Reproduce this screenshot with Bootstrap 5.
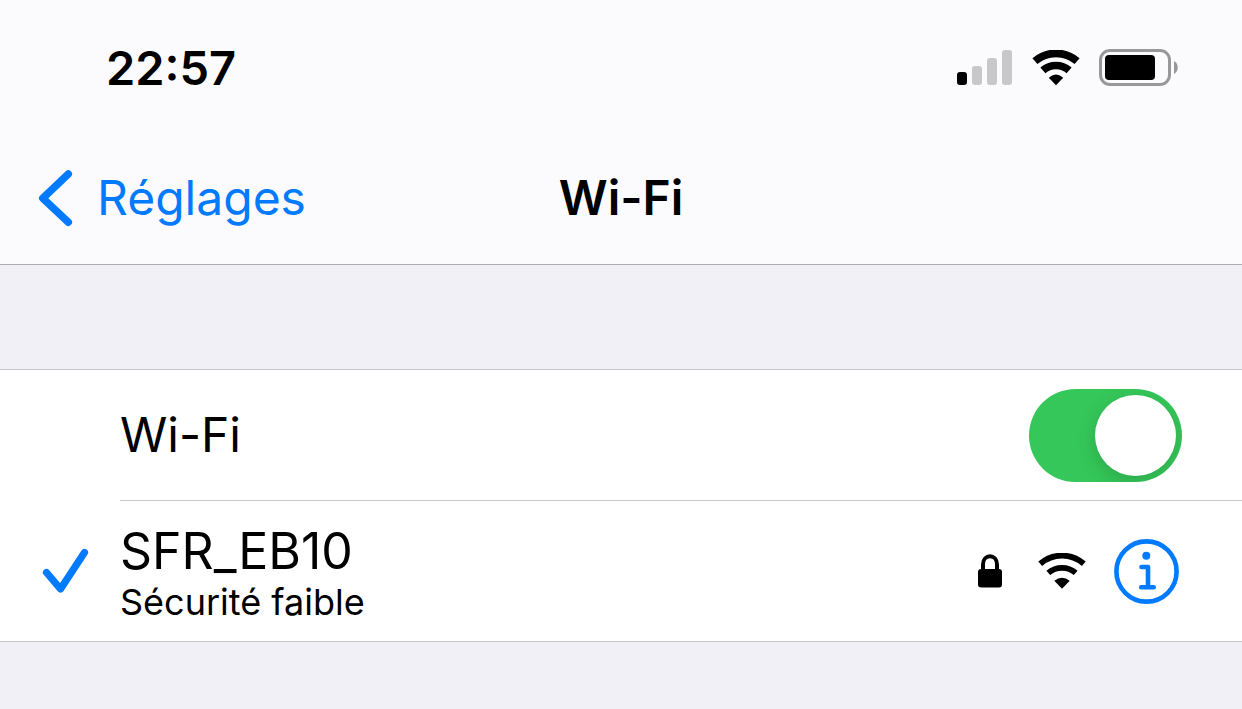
<!DOCTYPE html>
<html lang="fr">
<head>
<meta charset="utf-8">
<meta name="viewport" content="width=device-width, initial-scale=1">
<title>Wi-Fi</title>
<link href="https://cdn.jsdelivr.net/npm/bootstrap@5.3.0/dist/css/bootstrap.min.css" rel="stylesheet">
<style>
  body { font-family: Inter, "Liberation Sans", sans-serif; color: #000; background: #f1f0f6; }
  svg { display: block; flex: none; }
  .top-area { background: #fbfbfd; border-bottom: 1px solid #adadb0; }
  .status-bar { min-height: 136px; padding: 0 64px 0 106px; }
  .status-icons { gap: 19px; }
  .clock { font-size: 47px; line-height: 56px; font-weight: 600; }
  .title-bar { min-height: 128px; padding: 0 38px 4px; }
  .back-link { color: #007aff; font-size: 48px; line-height: 60px; gap: 24px; }
  .screen-title { font-size: 48px; line-height: 60px; font-weight: 600; }
  .settings { margin-top: 104px; border: solid #c6c6c8; border-width: 1px 0; background: #fff; }
  .lead-slot { width: 120px; padding-left: 42px; flex: none; }
  .entry { min-height: 131px; padding-right: 60px; }
  .entry-network { min-height: 140px; padding-right: 63px; }
  .divided { border-bottom: 1px solid #c6c6c8; }
  .entry-name { font-size: 48px; line-height: 60px; }
  .network-name { font-size: 50px; line-height: 60px; padding-top: 2px; }
  .entry-note { font-size: 36px; line-height: 42px; }
  .network-icons { gap: 28px; }
  .lock-icon { margin-right: 8px; }
  .form-check-input.wifi-toggle {
    display: flex; justify-content: flex-end; width: 153px; height: 93px; margin: 0; padding: 6px;
    border: 0; border-radius: 47px; background: #e9e9ea; overflow: hidden; cursor: pointer;
  }
  .wifi-toggle::before {
    content: ""; width: 81px; height: 81px; border-radius: 50%; background: #fff;
    box-shadow: 0 6px 20px rgba(0, 0, 0, .16);
  }
  .form-check-input.wifi-toggle:checked { background: #35c759; }
  .form-check-input.wifi-toggle:not(:checked) { justify-content: flex-start; }
</style>
</head>
<body>
<header class="top-area">
  <div class="status-bar d-flex align-items-center justify-content-between">
    <time class="clock" datetime="22:57">22:57</time>
    <div class="status-icons d-flex align-items-center">
      <svg width="56" height="36" viewBox="0 0 56 36" role="img" aria-label="Réseau mobile">
        <rect y="22" width="10" height="13" rx="3"/>
        <g fill="#c8c8ca"><rect x="15" y="16" width="10" height="19" rx="3"/><rect x="30" y="8" width="10" height="27" rx="3"/><rect x="45" width="10" height="35" rx="3"/></g>
      </svg>
      <svg width="48" height="36" viewBox="0 0 48 36" role="img" aria-label="Wi-Fi">
        <g fill="none" stroke="#000" stroke-width="7.7"><path d="M2.9 11.2A32.2 32.2 0 0 1 45.1 11.2"/><path d="M10.9 20.4A20 20 0 0 1 37.1 20.4"/></g>
        <path d="M17.3 28.3Q16.8 27.7 17.4 27.2Q24 22 30.6 27.2Q31.2 27.7 30.7 28.3L24.5 34.8Q24 35.3 23.5 34.8Z"/>
      </svg>
      <svg width="79" height="38" viewBox="0 0 79 38" role="img" aria-label="Batterie">
        <rect x="1.5" y="1.5" width="69" height="34" rx="9.5" fill="none" stroke="#98989a" stroke-width="3"/>
        <rect x="6" y="6" width="50" height="25" rx="4"/>
        <path d="M75 12C80 14.5 80 22.5 75 25Z" fill="#98989a"/>
      </svg>
    </div>
  </div>
  <nav class="title-bar row g-0 align-items-center" aria-label="Navigation">
    <div class="col d-flex">
      <a class="back-link d-flex align-items-center text-decoration-none" href="#reglages">
        <svg width="35" height="58" viewBox="0 0 35 58" fill="none" stroke="#007aff" stroke-width="7.5" stroke-linecap="round" stroke-linejoin="round"><path d="M30.3 5L4.8 29.2L30.3 53.2"/></svg>
        Réglages
      </a>
    </div>
    <h1 class="screen-title col-auto mb-0">Wi-Fi</h1>
    <div class="col"></div>
  </nav>
</header>
<main class="settings">
  <div class="d-flex">
    <div class="lead-slot"></div>
    <div class="entry divided d-flex flex-grow-1 align-items-center justify-content-between">
      <label class="entry-name" for="wifi">Wi-Fi</label>
      <input class="form-check-input wifi-toggle" type="checkbox" role="switch" id="wifi" checked>
    </div>
  </div>
  <div class="d-flex align-items-center">
    <div class="lead-slot">
      <svg width="47" height="46" viewBox="0 0 47 46" fill="none" stroke="#007aff" stroke-width="7.2" stroke-linecap="round" stroke-linejoin="round" role="img" aria-label="Connecté"><path d="M4.5 24.5L18.5 41L42.5 4.5"/></svg>
    </div>
    <div class="entry-network d-flex flex-grow-1 align-items-center justify-content-between">
      <div>
        <div class="network-name">SFR_EB10</div>
        <div class="entry-note">Sécurité faible</div>
      </div>
      <div class="network-icons d-flex align-items-center">
        <svg class="lock-icon" width="24" height="34" viewBox="0 0 24 34" role="img" aria-label="Sécurisé">
          <path d="M5 17V10.5C5 -.5 19 -.5 19 10.5V17" fill="none" stroke="#000" stroke-width="4"/>
          <rect y="15" width="24" height="18.5" rx="3"/>
        </svg>
        <svg width="48" height="36" viewBox="0 0 48 36" role="img" aria-label="Signal">
          <g fill="none" stroke="#000" stroke-width="5.8"><path d="M2.2 10.8A33 33 0 0 1 45.8 10.8"/><path d="M10.3 19.9A21 21 0 0 1 37.7 19.9"/></g>
          <path d="M16.3 27.8Q24 21.8 31.7 27.8L24.5 35.3Q24 35.8 23.5 35.3Z"/>
        </svg>
        <button class="btn p-0 border-0" type="button" aria-label="Informations">
          <svg width="65" height="65" viewBox="0 0 65 65" fill="none" stroke="#007aff" stroke-width="4.6" stroke-linecap="round" stroke-linejoin="round"><circle cx="32.5" cy="32.5" r="30.1"/><path d="M27.5 28H34V48.3M27.2 48.3H39.7"/><circle cx="32.3" cy="16.8" r="4" fill="#007aff" stroke="none"/></svg>
        </button>
      </div>
    </div>
  </div>
</main>
<script src="https://cdn.jsdelivr.net/npm/bootstrap@5.3.0/dist/js/bootstrap.bundle.min.js"></script>
</body>
</html>
